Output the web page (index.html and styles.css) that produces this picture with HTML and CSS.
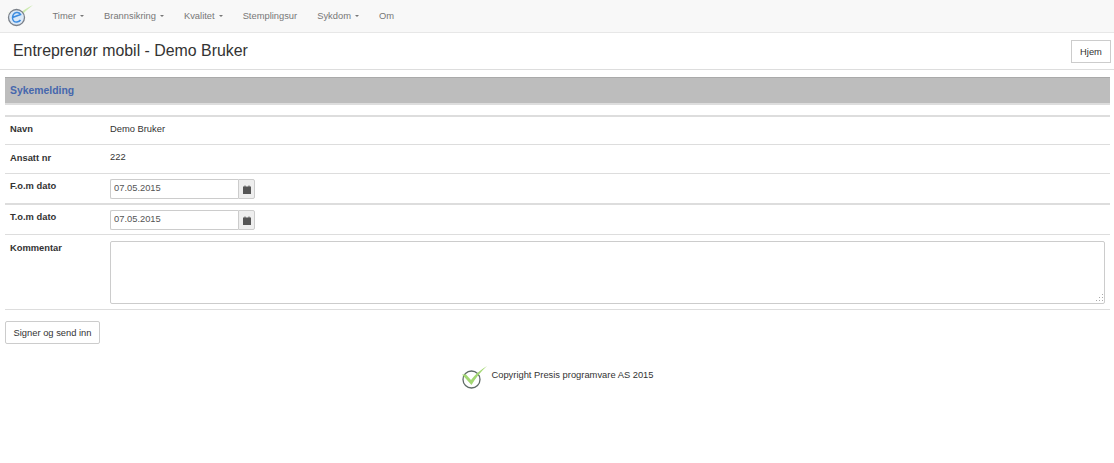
FILE: index.html
```html
<!DOCTYPE html>
<html lang="no">
<head>
<meta charset="utf-8">
<title>Sykemelding</title>
<link rel="stylesheet" href="styles.css">
</head>
<body>
<nav class="navbar">
  <svg class="logo" width="36" height="26" viewBox="0 0 36 26">
    <path d="M7 10 Q13 13 17 14 Q24 7 33 3 Q25 9 19 16 Q12 14 7 10Z" fill="#cdeab0"/>
    <circle cx="16.500" cy="15.500" r="8" fill="#dbe9f8" stroke="#7b8189" stroke-width="1.300"/>
    <path d="M12.500 15.500 L20.500 12.500 Q19 10 16.500 10.500 Q12.500 11.500 12.500 16 Q13 20.500 17 20 Q19.500 19.500 20.500 18" fill="none" stroke="#3d8ce0" stroke-width="1.500"/>
  </svg>
  <ul class="nav-list">
    <li class="nav-item">Timer<span class="caret"></span></li>
    <li class="nav-item">Brannsikring<span class="caret"></span></li>
    <li class="nav-item">Kvalitet<span class="caret"></span></li>
    <li class="nav-item">Stemplingsur</li>
    <li class="nav-item">Sykdom<span class="caret"></span></li>
    <li class="nav-item">Om</li>
  </ul>
</nav>
<header class="page-header">
  <h1 class="page-title">Entreprenør mobil - Demo Bruker</h1>
  <button class="home-btn" type="button">Hjem</button>
</header>
<main class="content">
  <h2 class="section-bar">Sykemelding</h2>
  <div class="form-table">
    <div class="row row-navn"><div class="label">Navn</div><div class="value">Demo Bruker</div></div>
    <div class="row row-ansatt"><div class="label label-low">Ansatt nr</div><div class="value">222</div></div>
    <div class="row row-date row-thick"><div class="label label-low">F.o.m dato</div>
      <div class="date-group"><input class="date-input" type="text" value="07.05.2015"><span class="date-addon"><svg width="8" height="9" viewBox="0 0 8 9"><path d="M0 1.500h1.500V.5h1V1.500h3V.5h1V1.500H8V9H0z" fill="#555"/></svg></span></div>
    </div>
    <div class="row row-date"><div class="label label-low">T.o.m dato</div>
      <div class="date-group"><input class="date-input" type="text" value="07.05.2015"><span class="date-addon"><svg width="8" height="9" viewBox="0 0 8 9"><path d="M0 1.500h1.500V.5h1V1.500h3V.5h1V1.500H8V9H0z" fill="#555"/></svg></span></div>
    </div>
    <div class="row row-comment"><div class="label label-low">Kommentar</div>
      <div class="comment-wrap"><textarea class="comment"></textarea>
        <svg class="resize-grip" width="10" height="10" viewBox="0 0 10 10"><path d="M8 1h1v1H8zM5 4h1v1H5zM8 4h1v1H8zM2 7h1v1H2zM5 7h1v1H5zM8 7h1v1H8z" fill="#aaa"/></svg>
      </div>
    </div>
  </div>
  <button class="submit-btn" type="button">Signer og send inn</button>
  <footer class="footer">
    <svg width="26" height="24" viewBox="0 0 26 24">
      <circle cx="10.500" cy="14.500" r="8.500" fill="#fff" stroke="#5f6b66" stroke-width="1.300"/>
      <path d="M1 9.500 L5 9.500 L10 15 Q16 7 26 1 Q17 9 10.500 20 Z" fill="#a3d873"/>
    </svg>
    <span class="copyright">Copyright Presis programvare AS 2015</span>
  </footer>
</main>
</body>
</html>
```
FILE: styles.css
```css
* { box-sizing: border-box; }
html, body { margin: 0; padding: 0; }
body { font-family: "Liberation Sans", Arial, sans-serif; font-size: 9.35px; line-height: 13px; color: #333; background: #fff; }

.navbar { display: flex; align-items: flex-start; height: 33px; background: #f8f8f8; border-bottom: 1px solid #e7e7e7; }
.logo { flex: none; margin: 2px 0 0 0; }
.nav-list { display: flex; list-style: none; margin: 0; padding: 0 0 0 6.500px; }
.nav-item { font-size: 9.35px; line-height: 13px; color: #777; padding: 9.500px 10px; }
.caret { display: inline-block; margin-left: 4px; vertical-align: middle; border-top: 2px solid #777; border-left: 2px solid transparent; border-right: 2px solid transparent; }

.page-header { display: flex; justify-content: space-between; align-items: flex-start; height: 37px; border-bottom: 1px solid #ddd; padding: 7px 3px 0 13px; }
.page-title { margin: 0; font-size: 15.9px; line-height: 22px; font-weight: 400; color: #333; }
.home-btn { height: 23px; width: 40px; margin: 0; padding: 0; font: 9.35px "Liberation Sans", Arial, sans-serif; color: #333; background: #fff; border: 1px solid #ccc; }

.content { padding: 7px 4px 0 5px; }
.section-bar { margin: 0; height: 28px; padding: 0 5px; font-size: 10.4px; line-height: 25px; font-weight: 700; color: #4667ad; background: #bdbdbd; border-top: 1px solid #aaa; border-bottom: 2px solid #ddd; }

.form-table { margin-top: 10px; border-top: 2px solid #ddd; }
.row { display: flex; align-items: flex-start; border-bottom: 1px solid #ddd; }
.row-navn { height: 28px; padding-top: 6px; }
.row-ansatt { height: 29px; padding-top: 6px; }
.row-date { height: 30px; padding-top: 5px; }
.row-thick { height: 31px; border-bottom-width: 2px; }
.row-comment { height: 75px; padding-top: 6px; }
.label { flex: none; width: 105px; padding-left: 5px; font-weight: 700; }
.label-low { margin-top: 1px; }
.value { color: #333; }

.date-group { display: flex; width: 145px; height: 20px; }
.date-input { width: 128px; height: 20px; padding: 0 3px 2px; font: 9.35px "Liberation Sans", Arial, sans-serif; color: #555; background: #fff; border: 1px solid #ccc; border-right: 0; border-radius: 2px 0 0 2px; outline: none; }
.date-addon { display: flex; align-items: center; justify-content: center; width: 17px; height: 20px; background: #eee; border: 1px solid #ccc; border-radius: 0 2px 2px 0; }
.comment-wrap { position: relative; flex: 1; margin-right: 5px; height: 63px; }
.comment { display: block; width: 100%; height: 63px; padding: 3px; background: #fff; border: 1px solid #ccc; border-radius: 2px; outline: none; resize: none; }
.resize-grip { position: absolute; right: 1px; bottom: 1px; }

.submit-btn { display: block; width: 95px; height: 23px; margin: 11px 0 0; padding: 0; font: 9.35px "Liberation Sans", Arial, sans-serif; color: #333; background: #fff; border: 1px solid #ccc; border-radius: 2px; }

.footer { display: flex; justify-content: center; align-items: flex-start; gap: 4px; margin-top: 21px; }
.copyright { margin-top: 4px; color: #333; }
```
